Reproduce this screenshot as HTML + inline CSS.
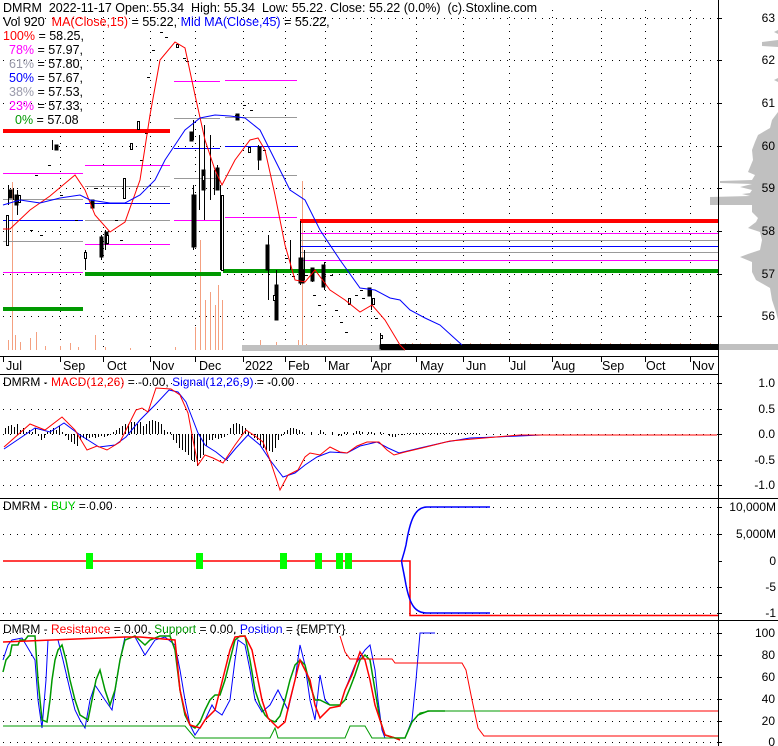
<!DOCTYPE html>
<html><head><meta charset="utf-8"><style>
html,body{margin:0;padding:0;background:#fff;}
svg{display:block;font-family:"Liberation Sans",Arial,sans-serif;}
text{white-space:pre;}
</style></head><body>
<svg width="778" height="746" viewBox="0 0 778 746" xmlns="http://www.w3.org/2000/svg">
<rect width="778" height="746" fill="#fff"/>
<path d="M778,30 L774,32 L778,34 Z M778,40 L762,42 L762,46 L778,47 Z M778,78 L774,80 L778,82 Z M778,112 L772,120 L770,128 L758,135 L755,142 L752,150 L753,160 L748,172 L755,175 L752,180 L720,181 L720,183 L752,184 L740,187 L752,190 L750,193 L742,194 L750,196 L710,197 L710,205 L752,205 L752,212 L758,218 L756,222 L748,228 L760,232 L762,240 L760,250 L748,254 L740,257 L752,262 L752,272 L756,280 L770,288 L772,300 L776,312 L778,320 Z" fill="#c0c0c0"/>
<rect x="700" y="344" width="78" height="6" fill="#c0c0c0"/>
<g fill="none" stroke="#000" stroke-dasharray="1,6">
<path d="M3,18.5H718M3,60.5H718M3,103.5H718M3,146.5H718M3,188.5H718M3,231.5H718M3,274.5H718M3,316.5H718"/>
<path d="M60.5,10V352M103.5,10V352M150.5,10V352M195.5,10V352M243.5,10V352M285.5,10V352M325.5,10V352M371.5,10V352M416.5,10V352M463.5,10V352M509.5,10V352M552.5,10V352M601.5,10V352M645.5,10V352M690.5,10V352"/>
<path d="M3,383.5H718M3,409.5H718M3,434.5H718M3,460.5H718M3,485.5H718"/>
<path d="M3,507.5H718M3,534.5H718M3,587.5H718M3,613.5H718"/>
<path d="M3,633.5H718M3,655.5H718M3,677.5H718M3,699.5H718M3,721.5H718M3,742.5H718"/>
</g>
<g stroke="#f4a080" stroke-width="1">
<path d="M12.5,350V182M8.5,350V340M15.5,350V335M20.5,350V342M30.5,350V338M36.5,350V332M45.5,350V346M60.5,350V346M70.5,350V343M78.5,350V347M95.5,350V335M105.5,350V347M130.5,350V348M175.5,350V347M195.5,350V327M200.5,350V240M205.5,350V300M210.5,350V292M215.5,350V305M218.5,350V285M222.5,350V300M260.5,350V340M276.5,350V342M290.5,350V348M298.5,350V340M302.5,350V181M306.5,350V344M368.5,350V346M375.5,350V346"/>
<path d="M405.5,350V343M412.5,350V343M420.5,350V343M430.5,350V343M440.5,350V343M450.5,350V343M460.5,350V343M470.5,350V343M480.5,350V343M490.5,350V343M500.5,350V343M510.5,350V343M520.5,350V343M530.5,350V343M540.5,350V343M550.5,350V343M560.5,350V343M570.5,350V343M580.5,350V343M590.5,350V343M600.5,350V343M610.5,350V343M620.5,350V343M630.5,350V343M640.5,350V343M650.5,350V343M660.5,350V343M670.5,350V343M680.5,350V343M690.5,350V343M700.5,350V343M710.5,350V343"/>
</g>
<rect x="242" y="345" width="163" height="6" fill="#c0c0c0"/>
<rect x="381" y="344" width="337" height="6" fill="#000"/>
<g stroke-width="1">
<path d="M3,173.5H83M3,272.5H83M85,165.5H170M85,244.5H170M174,81.5H220M174,220.5H220M225,80.5H297M225,217.5H297M300,233.5H718M300,260.5H718" stroke="#f0f"/>
<path d="M3,199.5H83M3,241.5H83M85,186.5H170M85,220.5H170M174,118.5H220M174,178.5H220M225,117.5H297M225,175.5H297M300,240.5H718M300,252.5H718" stroke="#999"/>
<path d="M3,220.5H83M85,203.5H170M174,148.5H220M225,146.5H297M300,246.5H718" stroke="#00f"/>
</g>
<path d="M3,131H170M300,221H718" stroke="#f00" stroke-width="4"/>
<path d="M3,309H83M85,274H221M223,271H718" stroke="#090" stroke-width="4"/>
<path d="M300.5,221V274" stroke="#000" stroke-width="1"/>
<g stroke="#000" fill="#000">
<path d="M8.5,185V205M13.5,188V200M17.5,190V215M52.5,140V150M57.5,145V150M85.5,250V270M101.5,235V260M105.5,230V250M193.5,120V140M193.5,185V250M199.5,135V210M204.5,125V220M210.5,135V200M214.5,170V195M217.5,165V190M220.5,185V270M237.5,115V120M258.5,145V170M268.5,235V300M276.5,270V320M277.5,285V305M290.5,240V270M300.5,245V285M304.5,250V280M312.5,268V282M324.5,262V290M371.5,290V310M380.5,333V345"/>
<rect x="9" y="190" width="3" height="8"/><rect x="15" y="195" width="3" height="10"/><rect x="55" y="145" width="3" height="5"/><rect x="91" y="200" width="3" height="8"/><rect x="100" y="237" width="3" height="20"/><rect x="105" y="232" width="3" height="12"/><rect x="190" y="132" width="3" height="9"/><rect x="192" y="195" width="4" height="52"/><rect x="202" y="170" width="3" height="20"/><rect x="216" y="168" width="3" height="22"/><rect x="236" y="114" width="3" height="6"/><rect x="258" y="147" width="3" height="13"/><rect x="266" y="245" width="3" height="25"/><rect x="275" y="285" width="3" height="35"/><rect x="299" y="258" width="4" height="25"/><rect x="301" y="270" width="3" height="13"/><rect x="311" y="268" width="3" height="13"/><rect x="322" y="265" width="3" height="22"/><rect x="368" y="288" width="3" height="8"/><rect x="380" y="345" width="3" height="4"/>
</g>
<g stroke="#000" fill="#fff">
<rect x="6.5" y="215.5" width="2" height="30"/><rect x="18.5" y="195.5" width="2" height="7"/><rect x="84.5" y="252.5" width="2" height="6"/><rect x="106.5" y="235.5" width="2" height="8"/><rect x="123.5" y="178.5" width="2" height="20"/><rect x="130.5" y="143.5" width="2" height="6"/><rect x="137.5" y="121.5" width="2" height="8"/><rect x="176.5" y="44.5" width="2" height="3"/><rect x="202.5" y="175.5" width="2" height="5"/><rect x="221.5" y="195.5" width="2" height="75"/><rect x="248.5" y="147.5" width="2" height="5"/><rect x="273.5" y="295.5" width="2" height="5"/><rect x="348.5" y="298.5" width="2" height="6"/><rect x="372.5" y="298.5" width="2" height="6"/><rect x="380.5" y="335.5" width="2" height="3"/>
</g>
<g stroke="#000"><path d="M160,32.5h3M165,37.5h3M152,50.5h3M147,77.5h3M40,235.5h3M30,230.5h3M60,195.5h3M95,188.5h3M35,175.5h3M48,165.5h3M75,220.5h3M115,220.5h3M120,240.5h3M140,160.5h3M145,133.5h3M183,58.5h3M186,61.5h3M235,115.5h3M243,105.5h3M250,110.5h3M263,150.5h3M285,258.5h3M292,276.5h3M305,275.5h3M313,295.5h3M318,305.5h3M330,275.5h3M335,310.5h3M340,322.5h3M345,332.5h3M355,295.5h3M360,290.5h3M362,298.5h3M375,318.5h3"/></g>
<polyline fill="none" stroke="#f00" stroke-width="1" points="3,229 10,229 30,210 50,196 75,175 85,190 95,215 110,232 125,222 140,180 150,115 160,60 175,42 185,48 195,95 205,140 215,170 222,185 235,160 250,140 258,138 265,150 275,195 285,245 295,280 305,282 315,270 330,290 345,300 360,312 372,305 385,320 400,345 405,350"/>
<polyline fill="none" stroke="#00f" stroke-width="1" points="3,205 20,200 40,203 60,198 80,195 90,200 110,203 125,203 140,195 155,180 165,160 175,145 185,130 200,118 215,115 230,116 245,118 260,130 275,160 290,190 305,200 320,230 340,260 360,288 375,290 390,298 400,300 410,310 425,318 440,325 462,345"/>
<path d="M718.5,0V746M0,356.5H718M0,374.5H718M0,498.5H778M0,620.5H778" stroke="#000" stroke-width="1"/>
<path d="M718,18.5h4M718,60.5h4M718,103.5h4M718,146.5h4M718,188.5h4M718,231.5h4M718,274.5h4M718,316.5h4M718,383.5h4M718,409.5h4M718,434.5h4M718,460.5h4M718,485.5h4M718,507.5h4M718,534.5h4M718,561.5h4M718,587.5h4M718,613.5h4M718,633.5h4M718,655.5h4M718,677.5h4M718,699.5h4M718,721.5h4M718,742.5h4" stroke="#000"/>
<path d="M3.5,357V362M60.5,357V362M103.5,357V362M150.5,357V362M195.5,357V362M243.5,357V362M285.5,357V362M325.5,357V362M371.5,357V362M416.5,357V362M463.5,357V362M509.5,357V362M552.5,357V362M601.5,357V362M645.5,357V362M690.5,357V362" stroke="#000"/>
<g font-size="12.5" fill="#000">
<text x="6" y="370">Jul</text><text x="63" y="370">Sep</text><text x="107" y="370">Oct</text><text x="152" y="370">Nov</text><text x="199" y="370">Dec</text><text x="245" y="370">2022</text><text x="288" y="370">Feb</text><text x="328" y="370">Mar</text><text x="372" y="370">Apr</text><text x="420" y="370">May</text><text x="466" y="370">Jun</text><text x="510" y="370">Jul</text><text x="553" y="370">Aug</text><text x="602" y="370">Sep</text><text x="646" y="370">Oct</text><text x="692" y="370">Nov</text>
</g>
<g font-size="12" fill="#000" text-anchor="end">
<text x="775" y="22">63</text><text x="775" y="64">62</text><text x="775" y="107">61</text><text x="775" y="150">60</text><text x="775" y="192">59</text><text x="775" y="235">58</text><text x="775" y="278">57</text><text x="775" y="320">56</text>
<text x="775" y="387">1.0</text><text x="775" y="413">0.5</text><text x="775" y="438">0.0</text><text x="775" y="464">-0.5</text><text x="775" y="489">-1.0</text>
<text x="776" y="511">10,000M</text><text x="776" y="538">5,000M</text><text x="776" y="565">0</text><text x="776" y="591">-5</text><text x="776" y="617">-1</text>
<text x="775" y="637">100</text><text x="775" y="659">80</text><text x="775" y="681">60</text><text x="775" y="703">40</text><text x="775" y="725">20</text><text x="775" y="746">0</text>
</g>
<g font-size="12.5">
<text x="3" y="12" fill="#000">DMRM  2022-11-17 Open: 55.34  High: 55.34  Low: 55.22  Close: 55.22 (0.0%)  (c) Stoxline.com</text>
<text x="3" y="26"><tspan fill="#000">Vol 920  </tspan><tspan fill="#f00">MA(Close,15)</tspan><tspan fill="#000"> = 55.22, </tspan><tspan fill="#00f">Mid MA(Close,45)</tspan><tspan fill="#000"> = 55.22,</tspan></text>
<text x="3" y="40"><tspan fill="#f00">100%</tspan><tspan fill="#000"> = 58.25,</tspan></text>
<text x="9" y="54"><tspan fill="#f0f">78%</tspan><tspan fill="#000"> = 57.97,</tspan></text>
<text x="9" y="68"><tspan fill="#99a">61%</tspan><tspan fill="#000"> = 57.80,</tspan></text>
<text x="9" y="82"><tspan fill="#00f">50%</tspan><tspan fill="#000"> = 57.67,</tspan></text>
<text x="9" y="96"><tspan fill="#99a">38%</tspan><tspan fill="#000"> = 57.53,</tspan></text>
<text x="9" y="110"><tspan fill="#f0f">23%</tspan><tspan fill="#000"> = 57.33,</tspan></text>
<text x="15" y="124"><tspan fill="#090">0%</tspan><tspan fill="#000"> = 57.08</tspan></text>
</g>
<g font-size="12">
<text x="3" y="386"><tspan fill="#000">DMRM - </tspan><tspan fill="#f00">MACD(12,26)</tspan><tspan fill="#000"> = -0.00, </tspan><tspan fill="#00f">Signal(12,26,9)</tspan><tspan fill="#000"> = -0.00</tspan></text>
<text x="3" y="510"><tspan fill="#000">DMRM - </tspan><tspan fill="#0c0">BUY</tspan><tspan fill="#000"> = 0.00</tspan></text>
<text x="3" y="633"><tspan fill="#000">DMRM - </tspan><tspan fill="#f00">Resistance</tspan><tspan fill="#000"> = 0.00, </tspan><tspan fill="#090">Support</tspan><tspan fill="#000"> = 0.00, </tspan><tspan fill="#00f">Position</tspan><tspan fill="#000"> = {EMPTY}</tspan></text>
</g>
<g transform="translate(0.5,0)">
<path d="M5,434V428M8,434V426M11,434V425M14,434V427M17,434V424M20,434V430M23,434V428M26,434V432M29,434V430M32,434V432M35,434V428M38,434V436M41,434V440M44,434V438M47,434V432M50,434V430M53,434V428M56,434V430M59,434V426M62,434V432M65,434V436M68,434V440M71,434V442M74,434V444M77,434V446M80,434V440M83,434V438M86,434V440M89,434V438M92,434V437M95,434V438M98,434V437M101,434V436M104,434V437M107,434V436M110,434V435M113,434V432M116,434V430M119,434V428M122,434V426M125,434V424M128,434V424M131,434V422M134,434V422M137,434V424M140,434V422M143,434V426M146,434V424M149,434V421M152,434V420M155,434V421M158,434V422M161,434V424M164,434V430M167,434V432M170,434V432M173,434V440M176,434V443M179,434V448M182,434V450M185,434V452M188,434V455M191,434V460M194,434V462M197,434V466M200,434V458M203,434V455M206,434V446M209,434V440M212,434V440M215,434V438M218,434V439M221,434V438M224,434V437M227,434V435M230,434V428M233,434V424M236,434V423M239,434V424M242,434V426M245,434V428M248,434V432M251,434V435M254,434V438M257,434V440M260,434V445M263,434V448M266,434V450M269,434V451M272,434V452M275,434V448M278,434V440M281,434V436M284,434V432M287,434V430M290,434V428M293,434V428M296,434V429M299,434V430M302,434V432M305,434V434M311,434V432M320,434V430M323,434V432M332,434V432M338,434V436M341,434V436M344,434V432M347,434V432M353,434V433M356,434V431M359,434V431M362,434V432M368,434V432M371,434V432M374,434V433M380,434V432M383,434V433M389,434V436M392,434V437M395,434V437M398,434V435M401,434V435M404,434V435M407,434V433M410,434V433M413,434V433M416,434V433M419,434V433M422,434V433M425,434V433M428,434V433M431,434V433M434,434V433M437,434V433M440,434V433M443,434V433M446,434V433M449,434V433M452,434V433M455,434V433M458,434V433M461,434V433M464,434V433M467,434V433M470,434V433M473,434V433M476,434V433" stroke="#000" stroke-width="1"/>
</g>
<polyline fill="none" stroke="#00f" stroke-width="1" points="4,449 35,428 50,432 64,423 80,435 99,447 115,445 126,437 140,420 155,405 169,390 178,392 186,402 193,420 198,433 205,445 216,452 226,460 236,448 248,435 260,445 270,460 283,477 295,473 305,465 317,457 330,452 347,453 360,446 377,442 388,448 399,453 420,448 446,442 470,438 496,437 541,435"/>
<polyline fill="none" stroke="#f00" stroke-width="1" points="4,447 30,424 45,430 62,417 75,430 87,450 97,446 107,450 120,442 136,410 142,408 148,412 156,388 171,389 180,395 188,413 193,440 198,465 205,455 213,458 223,463 235,445 246,430 255,436 263,442 270,460 280,490 288,475 298,470 305,457 310,453 320,455 330,447 340,452 347,453 357,446 367,442 379,442 387,450 394,455 405,452 422,448 450,441 496,437 520,435 717,435"/>
<path d="M3,561H410V615.5H718" fill="none" stroke="#f00" stroke-width="1.5"/>
<path d="M490,507H427C415,507 410,520 406,545C403,558 401,561 402,561C401,561 403,568 406,585C410,605 415,613 427,613H490" fill="none" stroke="#00f" stroke-width="1.5"/>
<g fill="#0f0"><rect x="86" y="553" width="7" height="16"/><rect x="196" y="553" width="7" height="16"/><rect x="280" y="553" width="7" height="16"/><rect x="315" y="553" width="7" height="16"/><rect x="336" y="553" width="7" height="16"/><rect x="345" y="553" width="7" height="16"/></g>
<polyline fill="none" stroke="#00f" stroke-width="1" points="3,660 8,645 12,640 22,638 35,660 38,700 42,728 46,680 48,640 58,640 63,660 70,690 75,710 80,720 85,728 90,700 95,685 105,700 112,710 120,660 125,637 135,637 145,655 155,640 165,637 175,645 180,670 185,700 190,725 195,735 205,720 212,705 215,710 222,715 230,700 235,660 238,640 245,645 250,670 255,700 262,712 270,705 278,690 283,700 288,710 295,680 300,645 305,665 310,700 315,720 320,675 325,700 330,705 340,705 345,690 355,665 365,650 370,645 375,670 378,700 382,730 385,738 395,738 405,738 412,720 416,680 420,633 435,633"/>
<polyline fill="none" stroke="#090" stroke-width="1.5" points="3,672 6,660 10,655 12,645 18,645 20,640 25,640 28,636 35,636 38,680 42,720 47,722 50,700 52,680 55,660 58,650 62,645 66,660 70,680 75,700 80,715 88,720 92,700 96,680 100,670 105,690 110,705 115,690 120,660 125,640 135,636 145,645 150,640 160,636 170,636 175,650 180,690 185,715 190,725 195,728 200,722 205,710 210,700 215,695 220,695 225,680 230,660 235,640 240,636 245,636 250,660 255,690 260,705 265,715 270,720 275,722 280,716 285,700 290,680 295,665 300,660 305,665 310,685 315,700 320,700 330,705 340,705 345,700 350,688 355,675 360,660 365,655 370,660 375,690 380,720 385,735 395,738 405,738 412,722 418,715 428,711 445,711"/>
<polyline fill="none" stroke="#f00" stroke-width="1.5" points="3,642 125,637 140,637 175,640 180,690 185,712 190,725 200,728 205,720 215,710 220,690 230,650 235,637 245,636 252,650 258,680 262,700 268,718 278,728 285,722 290,700 295,680 300,660 310,680 315,705 320,718 330,708 340,706 345,690 352,675 360,652 365,660 370,680 375,705 380,720 385,735 395,738 400,740"/>
<path d="M3,726H185L195,738H270L275,728 L278,738 H345L350,726H365L372,738H405L412,722L420,713L430,711H500" fill="none" stroke="#090" stroke-width="1"/>
<path d="M340,636L345,652L350,659H392L395,663H462L466,670L472,700L478,728L484,736H718M500,711H718" fill="none" stroke="#f00" stroke-width="1"/>
</svg>
</body></html>
